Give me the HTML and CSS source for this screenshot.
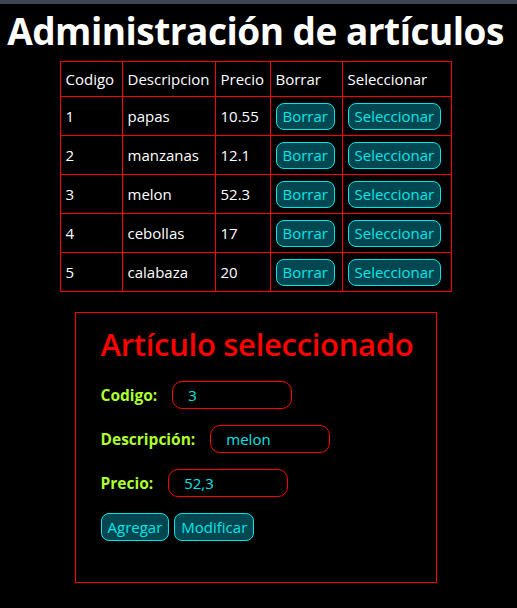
FILE: index.html
```html
<!DOCTYPE html>
<html lang="es">
<head>
    <meta charset="UTF-8">
    <meta name="viewport" content="width=device-width, initial-scale=1.0">
    <title>Administración de artículos</title>
    <link rel="stylesheet" href="styles.css">
</head>
<body>
    <div class="top-bar"></div>
    <div class="page">
        <h1>Administración de artículos</h1>

        <table class="articles">
            <thead>
                <tr>
                    <th class="col-code">Codigo</th>
                    <th class="col-desc">Descripcion</th>
                    <th class="col-price">Precio</th>
                    <th class="col-del">Borrar</th>
                    <th class="col-sel">Seleccionar</th>
                </tr>
            </thead>
            <tbody>
                <tr>
                    <td>1</td>
                    <td>papas</td>
                    <td>10.55</td>
                    <td><button class="btn">Borrar</button></td>
                    <td><button class="btn">Seleccionar</button></td>
                </tr>
                <tr>
                    <td>2</td>
                    <td>manzanas</td>
                    <td>12.1</td>
                    <td><button class="btn">Borrar</button></td>
                    <td><button class="btn">Seleccionar</button></td>
                </tr>
                <tr>
                    <td>3</td>
                    <td>melon</td>
                    <td>52.3</td>
                    <td><button class="btn">Borrar</button></td>
                    <td><button class="btn">Seleccionar</button></td>
                </tr>
                <tr>
                    <td>4</td>
                    <td>cebollas</td>
                    <td>17</td>
                    <td><button class="btn">Borrar</button></td>
                    <td><button class="btn">Seleccionar</button></td>
                </tr>
                <tr>
                    <td>5</td>
                    <td>calabaza</td>
                    <td>20</td>
                    <td><button class="btn">Borrar</button></td>
                    <td><button class="btn">Seleccionar</button></td>
                </tr>
            </tbody>
        </table>

        <div class="selected">
            <h2>Artículo seleccionado</h2>
            <div class="field">
                <label for="codigo">Codigo:</label>
                <input type="text" id="codigo" value="3">
            </div>
            <div class="field">
                <label for="descripcion">Descripción:</label>
                <input type="text" id="descripcion" value="melon">
            </div>
            <div class="field">
                <label for="precio">Precio:</label>
                <input type="text" id="precio" value="52,3">
            </div>
            <div class="actions">
                <button class="btn">Agregar</button>
                <button class="btn">Modificar</button>
            </div>
        </div>
    </div>
</body>
</html>
```

FILE: styles.css
```css
body {
    background-color: #000;
    color: #fff;
    font-family: "Open Sans", "Noto Sans", sans-serif;
    font-size: 15px;
    margin: 0;
}

.top-bar {
    height: 4px;
    background-color: #3d4752;
}

.page {
    width: 511px;
    text-align: center;
}

h1 {
    font-size: 37px;
    font-weight: bold;
    margin: 0;
    padding-top: 2px;
    height: 55px;
    line-height: 50px;
    letter-spacing: -0.5px;
}

/* Table */
.articles {
    border-collapse: collapse;
    margin: 0 auto;
    text-align: left;
}

.articles th,
.articles td {
    border: 1px solid #ff0000;
    padding: 5px 5px;
    font-weight: normal;
    height: 28px;
}

.articles th {
    height: 24px;
}

.col-code { width: 51px; }
.col-desc { width: 82px; }
.col-price { width: 44px; }
.col-del { width: 61px; }
.col-sel { width: 98px; }

.btn {
    background-color: #004752;
    color: #00e6e6;
    border: 1px solid #00e6e6;
    border-radius: 8px;
    font-family: inherit;
    font-size: 15px;
    height: 27px;
    padding: 0 6px;
    cursor: pointer;
}

/* Selected article */
.selected {
    width: 335px;
    margin: 20px auto 0;
    border: 1px solid #ff0000;
    padding: 0 0 41px 25px;
    text-align: left;
}

.selected h2 {
    color: #ff0000;
    font-size: 31px;
    font-weight: 600;
    margin: 0;
    height: 68px;
    line-height: 62px;
    letter-spacing: -0.3px;
}

.field {
    display: flex;
    align-items: center;
    gap: 15px;
    margin-bottom: 16px;
}

.field label {
    color: #adff2f;
    font-weight: bold;
    font-size: 15.5px;
}

.field input {
    width: 120px;
    height: 28px;
    box-sizing: border-box;
    padding: 0 15px;
    border: 1px solid #ff0000;
    border-radius: 10px;
    background-color: #000;
    color: #00e6e6;
    font-family: inherit;
    font-size: 15px;
    outline: none;
}

.actions {
    display: flex;
    gap: 5px;
}

.actions .btn {
    height: 28px;
    font-size: 15px;
    padding: 0 6px;
}
```
